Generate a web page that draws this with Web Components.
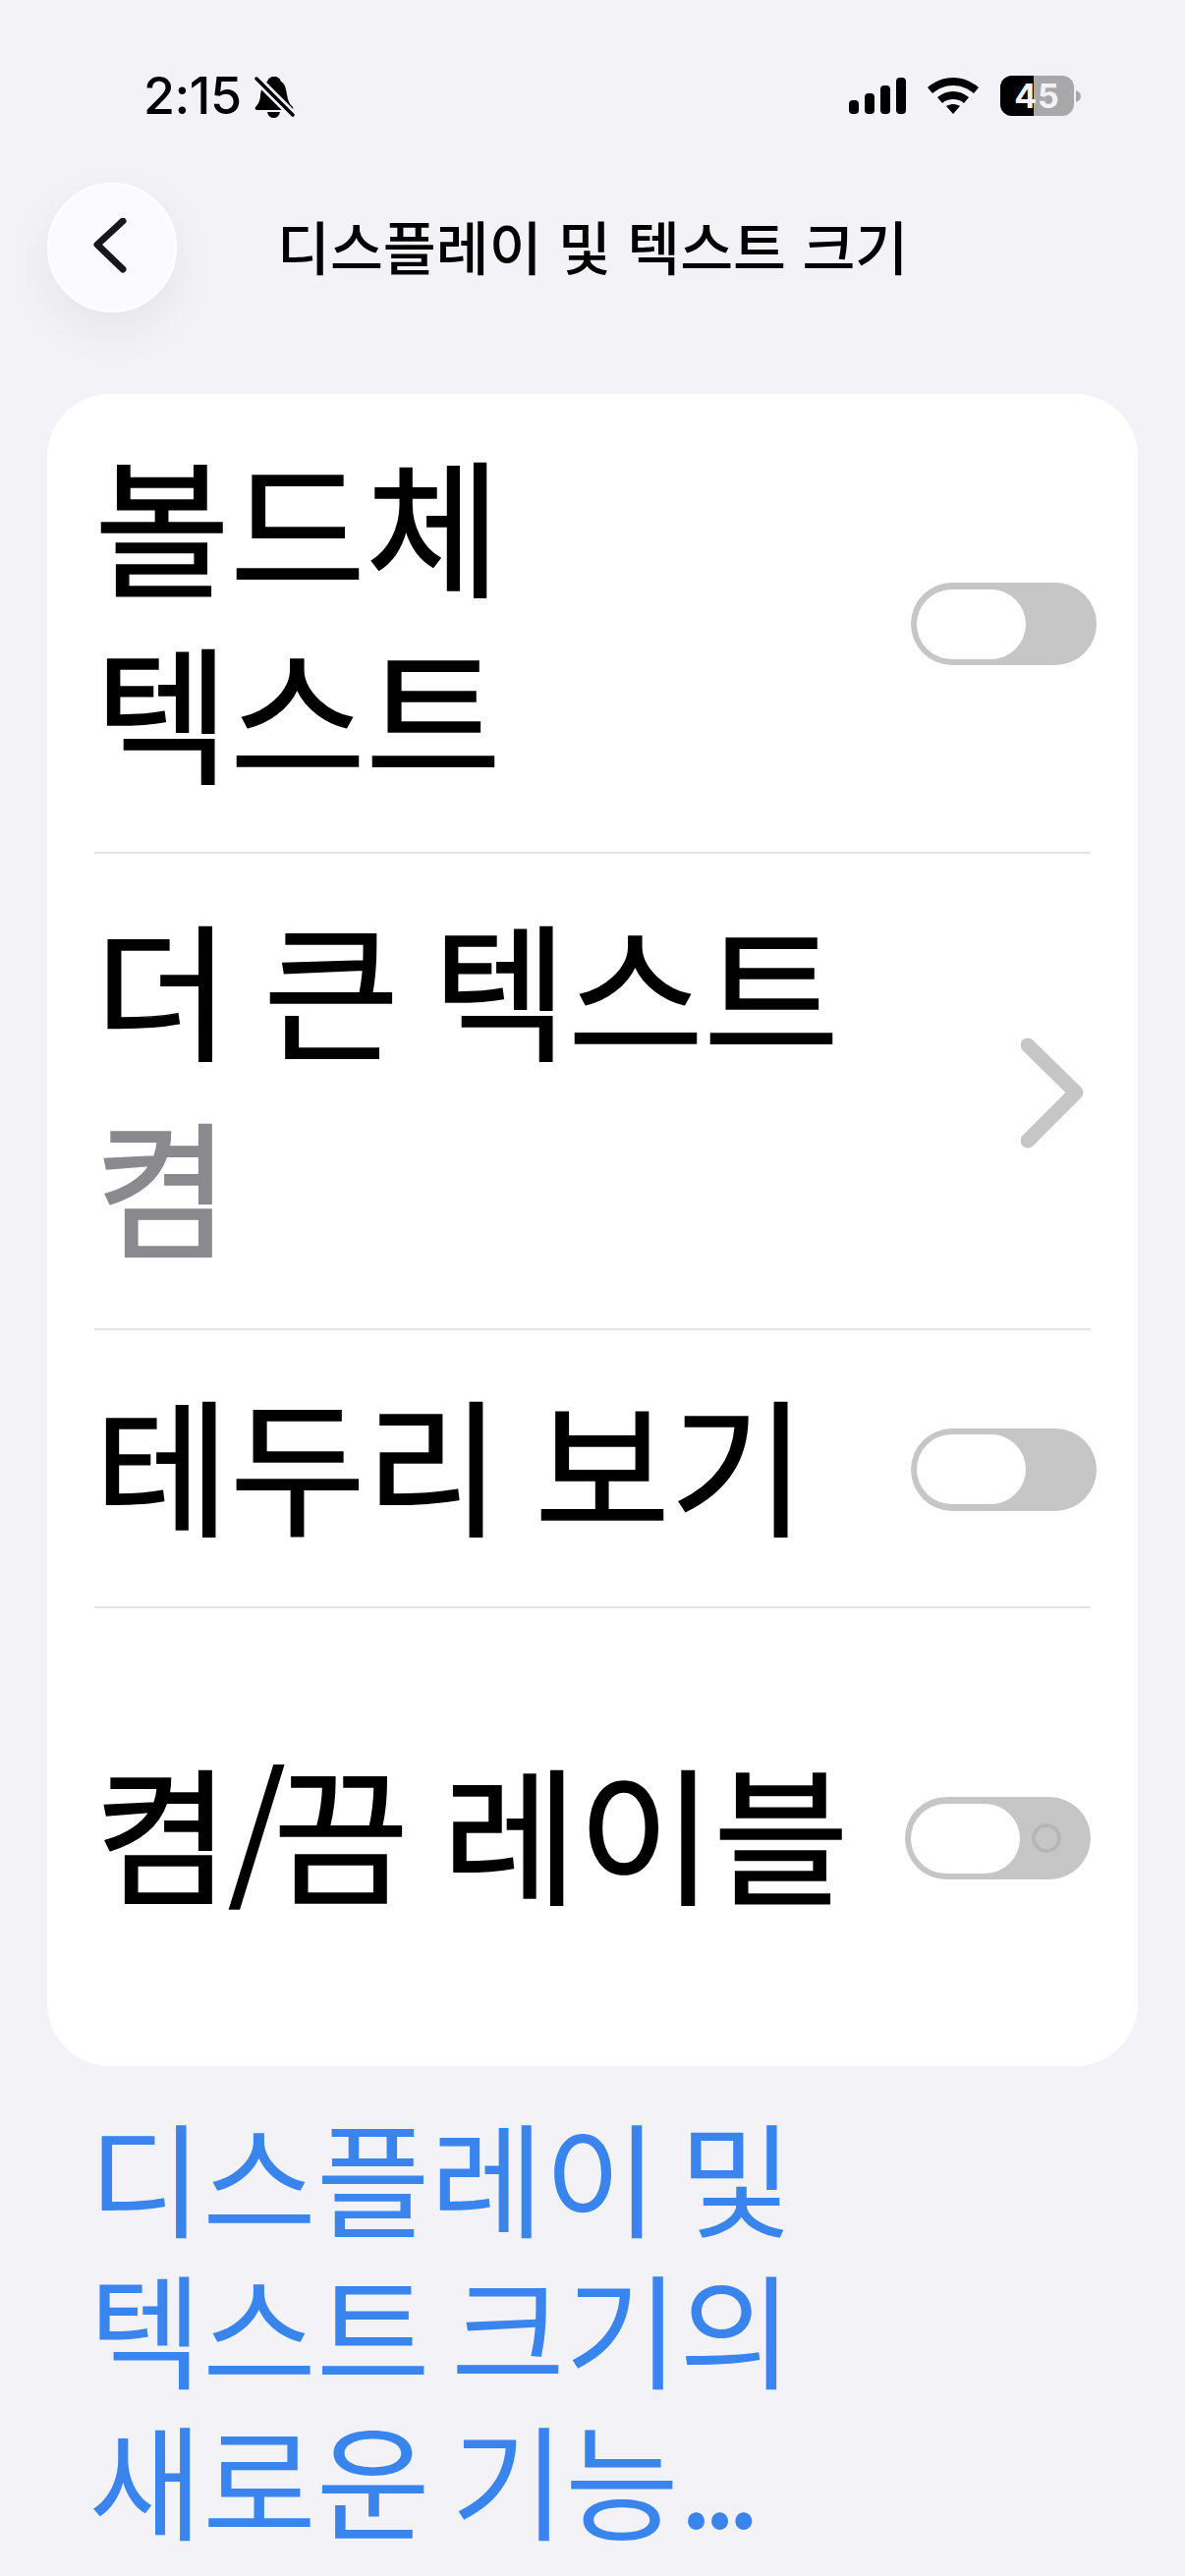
<!DOCTYPE html>
<html lang="ko">
<head>
<meta charset="utf-8">
<title>디스플레이 및 텍스트 크기</title>
<style>
  html, body { margin: 0; padding: 0; }
  body {
    width: 1206px;
    height: 2622px;
    overflow: hidden;
    background: #f2f2f7;
    font-family: Inter, "Noto Sans CJK KR", sans-serif;
    color: #000;
  }
  footer-link span { letter-spacing: -11px; }
  settings-row .slash { letter-spacing: -13px; margin-left: -2px; }
</style>
</head>
<body>
<status-bar></status-bar>
<nav-header>디스플레이 및 텍스트 크기</nav-header>
<settings-card>
  <settings-row height="468"><span>볼드체<br>텍스트</span><ax-switch slot="end"></ax-switch></settings-row>
  <settings-row height="485" detail="켬"><span>더 큰 텍스트</span><row-chevron slot="end"></row-chevron></settings-row>
  <settings-row height="283"><span>테두리 보기</span><ax-switch slot="end"></ax-switch></settings-row>
  <settings-row height="466" last><span>켬<span class="slash">/</span>끔 레이블</span><ax-switch slot="end" labelled></ax-switch></settings-row>
</settings-card>
<footer-link>디스플레이 및<br>텍스트 크기의<br>새로운 기능<span>...</span></footer-link>

<script>
class StatusBar extends HTMLElement {
  constructor () {
    super();
    this.attachShadow({ mode: 'open' });
    this.shadowRoot.innerHTML = `
      <style>
        :host { display: flex; justify-content: space-between; align-items: center; height: 62px; padding: 67px 106px 0 146px; }
        .left, .right { display: flex; align-items: center; }
        .time { font: 500 52px/62px Inter, sans-serif; letter-spacing: -0.5px; }
        .bell { margin-left: 12px; }
        .wifi { margin: 0 22px 0 22px; }
        .battery { display: block; }
      </style>
      <div class="left">
        <span class="time">2:15</span>
        <svg class="bell" width="42" height="44" viewBox="0 0 42 44">
          <path d="M21 2c4 0 6 2 7 5 4 2 5 7 6 13 1 6 2 9 6 13 1 2 0 3-2 3H4c-2 0-3-1-2-3 3-3 5-7 5-12 1-7 3-12 7-14 1-3 3-5 7-5z" fill="#000"/>
          <path d="M14 38h13c-1 4-3 6-6.500 6S15 42 14 38z" fill="#000"/>
          <path d="M3 4 40 41" stroke="#f2f2f7" stroke-width="9"/>
          <path d="M3 4 40 41" stroke="#000" stroke-width="3.500" stroke-linecap="round"/>
        </svg>
      </div>
      <div class="right">
        <svg width="58" height="38" viewBox="0 0 58 38">
          <rect x="0" y="23" width="10" height="14" rx="4"/>
          <rect x="16" y="16" width="10" height="21" rx="4"/>
          <rect x="32" y="8" width="10" height="29" rx="4"/>
          <rect x="48" y="0" width="10" height="37" rx="4"/>
        </svg>
        <svg class="wifi" width="52" height="38" viewBox="0 0 52 38">
          <path d="M26 0c10 0 19 4 26 10l-5 6c-6-5-13-8-21-8S11 11 5 16L0 10C7 4 16 0 26 0z"/>
          <path d="M26 14c6 0 11 2 16 6l-5 6c-3-3-7-4-11-4s-8 1-11 4l-5-6c5-4 10-6 16-6z"/>
          <path d="M26 27c3 0 5 1 7 2l-7 8-7-8c2-1 4-2 7-2z"/>
        </svg>
        <svg class="battery" width="82" height="42" viewBox="0 0 82 42">
          <path d="M77 15c3 1 5 3 5 6s-2 5-5 6z" fill="#a8a8aa"/>
          <rect x="0" y="0" width="75" height="41" rx="12" fill="#a8a8aa"/>
          <path d="M12 0h22v41H12A12 12 0 0 1 0 29V12A12 12 0 0 1 12 0z" fill="#000"/>
          <text x="37.500" y="33" text-anchor="middle" font-family="Inter, sans-serif" font-weight="700" font-size="34" letter-spacing="1" fill="#f2f2f7">45</text>
        </svg>
      </div>`;
  }
}

class NavHeader extends HTMLElement {
  constructor () {
    super();
    this.attachShadow({ mode: 'open' });
    this.shadowRoot.innerHTML = `
      <style>
        :host { display: flex; align-items: center; height: 132px; padding: 57px 0 0 48px; margin-bottom: 83px; }
        .back {
          box-sizing: border-box; width: 132px; height: 132px; border-radius: 50%;
          background: #fbfbff; border: 2px solid #fff;
          box-shadow: 0 18px 50px rgba(0, 0, 0, .06);
          display: flex; align-items: center; justify-content: center;
        }
        .title { margin-left: 102px; margin-top: -4px; font: 500 58.600px/132px "Noto Sans CJK KR", sans-serif; color: #000; white-space: nowrap; }
      </style>
      <div class="back">
        <svg width="40" height="60" viewBox="0 0 40 60" fill="none">
          <path d="M31 3 5 27l26 25" stroke="#17171c" stroke-width="7" stroke-linecap="round" stroke-linejoin="round"/>
        </svg>
      </div>
      <div class="title"><slot></slot></div>`;
  }
}

class SettingsCard extends HTMLElement {
  constructor () {
    super();
    this.attachShadow({ mode: 'open' });
    this.shadowRoot.innerHTML = `
      <style>
        :host { display: block; margin: 0 48px; background: #fff; border-radius: 64px; padding: 0 48px; }
      </style>
      <slot></slot>`;
  }
}

class SettingsRow extends HTMLElement {
  constructor () {
    super();
    this.attachShadow({ mode: 'open' });
    this.shadowRoot.innerHTML = `
      <style>
        :host { display: flex; box-sizing: border-box; align-items: center; justify-content: space-between; border-bottom: 2px solid #e3e3e6; }
        :host([last]) { border-bottom: 0; }
        .text { padding-bottom: 16px; font: 400 150px/190px "Noto Sans CJK KR", sans-serif; -webkit-text-stroke: 1.500px currentColor; word-spacing: -8px; white-space: nowrap; }
        :host([detail]) .text { padding-bottom: 4px; }
        .detail { color: #8a8a8e; line-height: 212px; }
        .detail:empty { display: none; }
      </style>
      <div class="text"><slot></slot><div class="detail"></div></div>
      <slot name="end"></slot>`;
  }

  connectedCallback () {
    this.style.height = this.getAttribute('height') + 'px';
    this.shadowRoot.querySelector('.detail').textContent = this.getAttribute('detail') || '';
  }
}

class AxSwitch extends HTMLElement {
  constructor () {
    super();
    this.attachShadow({ mode: 'open' });
    this.shadowRoot.innerHTML = `
      <style>
        :host { display: flex; align-items: center; box-sizing: border-box; width: 189px; height: 84px; margin: 2px -6px 0 0; padding: 6px; border-radius: 42px; background: #c6c6c6; }
        :host([labelled]) { margin-right: 0; }
        .thumb { box-sizing: border-box; width: 111px; height: 71px; border-radius: 36px; background: #fff; }
        .ring { display: none; box-sizing: border-box; width: 30px; height: 30px; margin-left: 12px; border-radius: 50%; border: 4px solid #b6b6b6; }
        :host([labelled]) .ring { display: block; }
      </style>
      <div class="thumb"></div><div class="ring"></div>`;
  }
}

class RowChevron extends HTMLElement {
  constructor () {
    super();
    this.attachShadow({ mode: 'open' });
    this.shadowRoot.innerHTML = `
      <style>:host { display: block; margin: 4px 1px 0 0; line-height: 0; }</style>
      <svg width="70" height="114" viewBox="0 0 70 114" fill="none">
        <path d="M7 8 56 56 7 105" stroke="#c6c6c6" stroke-width="15" stroke-linecap="round" stroke-linejoin="round"/>
      </svg>`;
  }
}

class FooterLink extends HTMLElement {
  constructor () {
    super();
    this.attachShadow({ mode: 'open' });
    this.shadowRoot.innerHTML = `
      <style>
        :host { display: block; margin: 33px 0 0 90px; font: 400 126px/154px "Noto Sans CJK KR", sans-serif; word-spacing: -14px; color: #3a84ee; white-space: nowrap; }
      </style>
      <slot></slot>`;
  }
}

customElements.define('status-bar', StatusBar);
customElements.define('nav-header', NavHeader);
customElements.define('settings-card', SettingsCard);
customElements.define('settings-row', SettingsRow);
customElements.define('ax-switch', AxSwitch);
customElements.define('row-chevron', RowChevron);
customElements.define('footer-link', FooterLink);
</script>
</body>
</html>
